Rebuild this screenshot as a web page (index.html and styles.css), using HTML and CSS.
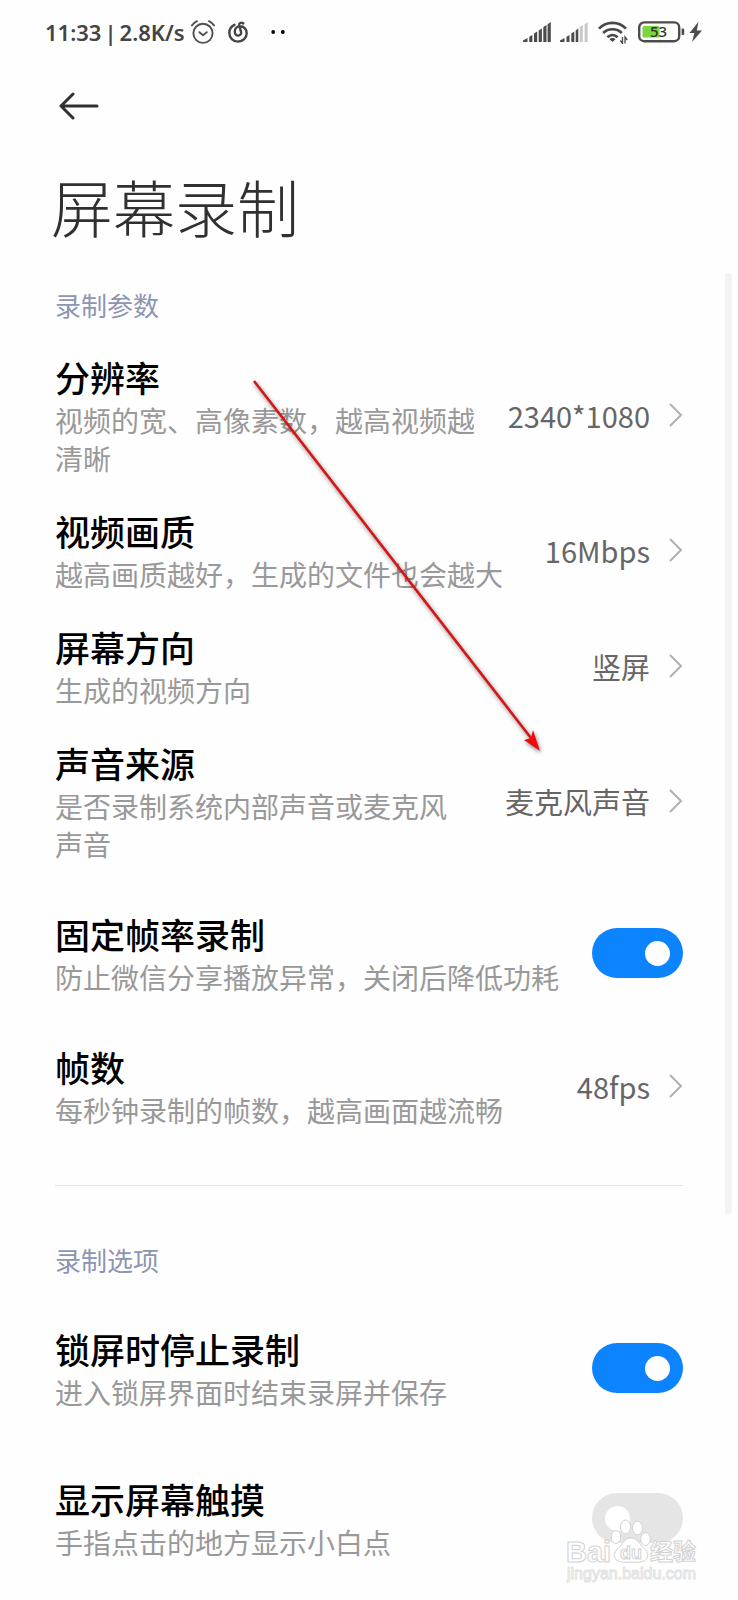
FILE: index.html
```html
<!DOCTYPE html>
<html lang="zh-CN">
<head>
<meta charset="utf-8">
<meta name="viewport" content="width=device-width, initial-scale=1">
<title>屏幕录制</title>
<link rel="stylesheet" href="styles.css">
</head>
<body>
<div class="screen">
  <header class="status">
    <div class="status-side">
      <div class="clock"><span>11:33</span><span>|</span><span>2.8K/s</span></div>
      <svg class="alarm" width="24" height="24" viewBox="0 0 24 24" fill="none" stroke="#505050" stroke-width="1.9" stroke-linecap="round" stroke-linejoin="round"><circle cx="12" cy="13.3" r="9.6"/><path d="M8.4 12.2l3.6 3 3.8-3M1 5.4C2.200 3.600 4 2.200 6 1.200M23 5.400C21.800 3.600 20 2.200 18 1.200"/></svg>
      <svg class="music" width="20" height="22" viewBox="0 0 20 22" fill="none" stroke="#444" stroke-width="2.400" stroke-linecap="round"><path d="M6.500 3.800C3.300 5.200 1.300 8.200 1.300 11.800c0 5 3.900 8.800 8.700 8.800s8.700-3.800 8.700-8.400c0-4-3-7-6.700-7-3.200 0-5.200 2.300-5.200 5.200 0 2.500 1.400 4.200 3.400 4.200s3.300-1.600 2.900-3.500L11.200 4.200c-.300-2 1.700-3.200 4.100-1.800"/></svg>
      <svg class="dots" width="14" height="6" viewBox="0 0 14 6" fill="#000"><circle cx="2.200" cy="3" r="1.900"/><circle cx="11.800" cy="3" r="1.900"/></svg>
    </div>
    <div class="status-side">
      <svg width="28" height="21" viewBox="0 0 28 21" fill="#4c4c4c"><path d="M0 20v-1.600L4.500 16v4zM6.200 20v-5.200l3.200-1.800v7zM11 20v-8.400l3.200-2V20zM15.700 20V8.400l3.200-2V20zM20.300 20V5l3.200-2v17zM24.600 20V2.300L27.800 0v20z"/></svg>
      <svg class="sim2" width="28" height="21" viewBox="0 0 28 21" fill="#4c4c4c"><path d="M0 20v-1.600L4.500 16v4zM6.500 20v-5.200l3-1.800v7zM11.300 20v-8.400l3-2V20zM15.700 20V8.400l2.600-2V20z"/><path d="M19.800 20V5l3-2v17zM24.600 20V2.300L27.600 0v20z" fill="#c8c8c8"/></svg>
      <svg class="wifi" width="30" height="23" viewBox="0 0 30 23" fill="none" stroke="#484848" stroke-width="2.700" stroke-linecap="butt"><path d="M1 7.600C8.500 0 20.500 0 28 7.600M5.200 12c5-5 13.600-5 18.600 0M9.400 16.300c3-2.900 7.200-2.900 10.200 0"/><path d="M14.500 21l-3-2.700c1.600-1.800 4.400-1.800 6 0z" fill="#484848" stroke="none"/><path d="M24.500 16v6.500l-2.200-3M27 22.500V16l2.200 3" stroke-width="1.300"/></svg>
      <svg class="battery" width="64" height="22" viewBox="0 0 64 22"><rect x="1.200" y="1.400" width="40" height="18.800" rx="5" fill="#fff" stroke="#4c4c4c" stroke-width="2.400"/><rect x="4.500" y="5" width="17" height="11.600" rx="1.500" fill="#7ad63d"/><path d="M43.600 7.500h1.400q1.200 0 1.200 1.200v4q0 1.200-1.200 1.200h-1.400z" fill="#4c4c4c"/><text class="charge" x="12" y="16">53</text><path d="M60.500.800L51.500 12h4.800l-2.200 9L64 9.400h-5.200z" fill="#4c4c4c"/></svg>
    </div>
  </header>

  <main class="page">
    <button class="back" type="button" aria-label="返回">
      <svg width="40" height="28" viewBox="0 0 40 28" fill="none" stroke="#303030" stroke-width="3" stroke-linecap="round" stroke-linejoin="round"><path d="M38 14H2M14 2L2 14l12 12"/></svg>
    </button>
    <h1 class="title">屏幕录制</h1>

    <section class="group">
      <h2 class="group-name">录制参数</h2>
      <button class="row" type="button">
        <span class="text"><span class="name">分辨率</span><span class="desc">视频的宽、高像素数，越高视频越清晰</span></span>
        <span class="value">2340*1080</span>
        <svg class="chevron" viewBox="0 0 14 24"><path d="M1 1l11 11L1 23"/></svg>
      </button>
      <button class="row" type="button">
        <span class="text"><span class="name">视频画质</span><span class="desc">越高画质越好，生成的文件也会越大</span></span>
        <span class="value">16Mbps</span>
        <svg class="chevron" viewBox="0 0 14 24"><path d="M1 1l11 11L1 23"/></svg>
      </button>
      <button class="row" type="button">
        <span class="text"><span class="name">屏幕方向</span><span class="desc">生成的视频方向</span></span>
        <span class="value">竖屏</span>
        <svg class="chevron" viewBox="0 0 14 24"><path d="M1 1l11 11L1 23"/></svg>
      </button>
      <button class="row" type="button">
        <span class="text"><span class="name">声音来源</span><span class="desc">是否录制系统内部声音或麦克风声音</span></span>
        <span class="value">麦克风声音</span>
        <svg class="chevron" viewBox="0 0 14 24"><path d="M1 1l11 11L1 23"/></svg>
      </button>
      <label class="row row-switch">
        <span class="text"><span class="name">固定帧率录制</span><span class="desc">防止微信分享播放异常，关闭后降低功耗</span></span>
        <input class="switch" type="checkbox" role="switch" checked>
      </label>
      <button class="row" type="button">
        <span class="text"><span class="name">帧数</span><span class="desc">每秒钟录制的帧数，越高画面越流畅</span></span>
        <span class="value">48fps</span>
        <svg class="chevron" viewBox="0 0 14 24"><path d="M1 1l11 11L1 23"/></svg>
      </button>
    </section>

    <section class="group group-next">
      <h2 class="group-name">录制选项</h2>
      <label class="row row-switch">
        <span class="text"><span class="name">锁屏时停止录制</span><span class="desc">进入锁屏界面时结束录屏并保存</span></span>
        <input class="switch" type="checkbox" role="switch" checked>
      </label>
      <label class="row row-switch">
        <span class="text"><span class="name">显示屏幕触摸</span><span class="desc">手指点击的地方显示小白点</span></span>
        <input class="switch" type="checkbox" role="switch">
      </label>
    </section>
  </main>

  <div class="scrollbar"></div>

  <svg class="pointer" width="300" height="384" viewBox="0 0 300 384"><path d="M4 4L281 361" stroke="#d81414" stroke-width="2.600" fill="none"/><path d="M290 374l-16-11 7-2 2-8z" fill="#f00a0a"/></svg>

  <svg class="watermark" width="136" height="68" viewBox="0 0 136 68">
    <g class="mark">
      <text x="2" y="44" class="brand">Bai</text>
      <ellipse cx="52" cy="19" rx="4.800" ry="6.500"/><ellipse cx="61.500" cy="9" rx="5" ry="7"/><ellipse cx="73.500" cy="10" rx="5" ry="6.800"/><ellipse cx="81.500" cy="21" rx="4.800" ry="6.500"/>
      <path d="M67 20c5 0 7 3.500 10 7s7.500 6.500 6.500 11.500-7 6.500-16.500 5.500c-9.500 1-15.500-.500-16.500-5.500s3.500-8 6.500-11.500 5-7 10-7z"/>
      <text x="56" y="41" class="du">du</text>
      <text x="86" y="42" class="cn">经验</text>
    </g>
    <text x="3" y="61" class="site">jingyan.baidu.com</text>
  </svg>
</div>
</body>
</html>
```
FILE: styles.css
```css
* { box-sizing: border-box; }

body {
  margin: 0;
  background: #fefefe;
  color: #000;
  font-family: "Noto Sans CJK SC", sans-serif;
}

.screen {
  position: relative;
  min-height: 100vh;
  overflow: hidden;
}

.status {
  display: flex;
  justify-content: space-between;
  align-items: center;
  height: 64px;
  padding: 0 36px 0 45px;
}

.status-side { display: flex; align-items: center; }

.clock {
  display: flex;
  gap: 3px;
  font: 600 22px/32px "Noto Sans", sans-serif;
  color: #444;
  white-space: nowrap;
}

.alarm { margin-left: 6px; }
.music { margin-left: 13px; }
.dots { margin-left: 23px; }
.sim2 { margin-left: 9px; }
.wifi { margin-left: 10px; }
.battery { margin-left: 10px; }
.charge { font: 500 15px "Noto Sans", sans-serif; fill: #333; }

.page { padding: 0 55px 6px 55px; }

button {
  border: 0;
  padding: 0;
  background: none;
  color: inherit;
  font: inherit;
  text-align: left;
  cursor: pointer;
}

.back {
  display: flex;
  align-items: center;
  height: 84px;
  padding-left: 4px;
}

.title {
  margin: 12px 0 0 -4px;
  font-size: 62px;
  font-weight: 300;
  line-height: 92px;
  color: #303030;
}

.group-name {
  margin: 0;
  font-size: 26px;
  font-weight: 400;
  line-height: 38px;
  color: #8d95b2;
}

.group { padding: 34px 0 41px; }
.group .group-name { margin-bottom: 14px; }

.group-next {
  border-top: 1px solid #e2e2e2;
  padding: 55px 0 0;
}

.row {
  display: flex;
  align-items: center;
  width: 100%;
  padding: 15px 0;
}

.row-switch { padding: 32px 0; gap: 20px; }

.text { flex: 1; min-width: 0; }
.name, .desc { display: block; }

.name {
  font-size: 35px;
  font-weight: 500;
  line-height: 48px;
}

.desc {
  font-size: 28px;
  font-weight: 400;
  line-height: 38px;
  color: #999;
}

.value {
  margin-left: 31px;
  font-size: 29px;
  line-height: 38px;
  color: #666;
  white-space: nowrap;
}

.chevron {
  width: 14px;
  height: 24px;
  margin-left: 19px;
  fill: none;
  stroke: #b0b0b0;
  stroke-width: 2;
}

.switch {
  appearance: none;
  flex: none;
  display: flex;
  align-items: center;
  width: 91px;
  height: 50px;
  margin: 0;
  padding: 0 13px;
  border-radius: 25px;
  background: #e5e5e5;
}

.switch::before {
  content: "";
  width: 25px;
  height: 25px;
  border-radius: 50%;
  background: #fff;
}

.switch:checked { justify-content: flex-end; background: #0d84ff; }

.scrollbar {
  position: absolute;
  top: 273px;
  right: 6px;
  width: 7px;
  height: 941px;
  border-radius: 3px;
  background: #f3f3f3;
}

.pointer {
  position: absolute;
  top: 377px;
  left: 250px;
  pointer-events: none;
  filter: drop-shadow(1px 2px 2px rgba(0, 0, 0, 0.5));
}

.watermark {
  position: absolute;
  right: 38px;
  bottom: 14px;
  pointer-events: none;
}

.mark { fill: #fff; stroke: #d2d2d2; stroke-width: 1; }
.brand { font: 700 29px "Liberation Sans", sans-serif; }
.du { font: 700 18px "Liberation Sans", sans-serif; }
.cn { font: 700 23px "Noto Sans CJK SC", sans-serif; }
.site { font: 400 16px "Liberation Sans", sans-serif; fill: #fff; stroke: #e2e2e2; stroke-width: 1; }
```
